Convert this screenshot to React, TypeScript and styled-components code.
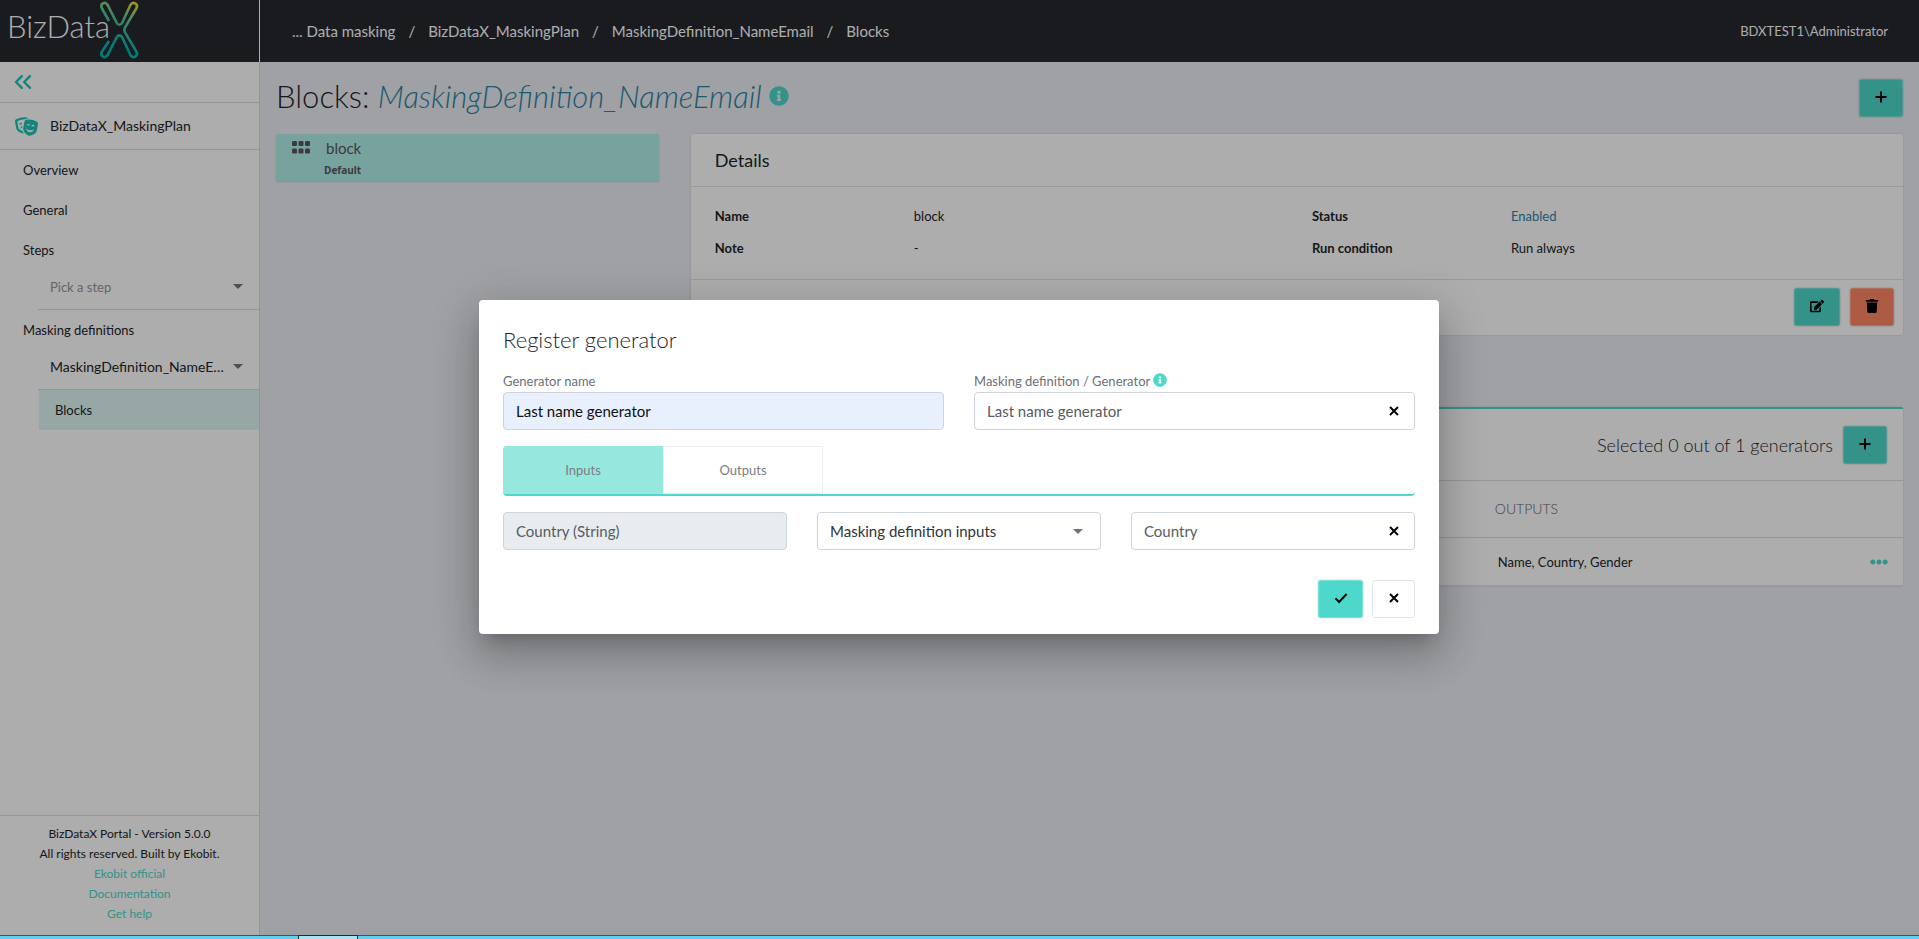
import React, { useState } from "react";
import styled, { createGlobalStyle } from "styled-components";
import { FaEdit, FaEllipsisH, FaInfoCircle, FaTheaterMasks, FaTrash } from "react-icons/fa";
import { ChevronsLeft } from "lucide-react";

const color = {
  teal: "#4dd8cb",
  tealSoft: "#96e8df",
  tealCard: "#b2efe8",
  tealPale: "#dff7f3",
  coral: "#ff8766",
  blue: "#2e84a5",
  header: "#25282f",
  page: "#ecedf3",
  line: "#e4e4e6",
  sideLine: "#dcdcde",
  field: "#ced4da",
};

const GlobalStyle = createGlobalStyle`
  *, *::before, *::after { box-sizing: border-box; }
  body {
    margin: 0;
    font: 400 13px/20px Lato, "Liberation Sans", sans-serif;
    color: #212529;
    background: ${color.page};
  }
  h1, h2, dl, dd { margin: 0; padding: 0; }
  a { text-decoration: none; color: inherit; }
  button, input, select { font: inherit; color: inherit; }
  button { cursor: pointer; }
  svg { display: block; flex: none; }
`;

const Screen = styled.div`
  display: flex;
  flex-direction: column;
  min-height: 100vh;
`;

const Portal = styled.div`
  position: relative;
  flex: 1;
  display: grid;
  grid-template-columns: 260px 1fr;
  grid-template-rows: 62px 1fr;
`;

/* Header */

const Brand = styled.a`
  background: ${color.header};
  border-right: 1px solid #fff;
`;

const TopBar = styled.header`
  display: flex;
  align-items: center;
  justify-content: space-between;
  padding: 0 31px 0 32px;
  background: ${color.header};
  color: #fff;
`;

const Crumbs = styled.nav`
  display: flex;
  gap: 13px;
  font-size: 15px;
`;

/* Sidebar */

const Sidebar = styled.aside`
  display: flex;
  flex-direction: column;
  background: #fff;
  border-right: 1px solid ${color.sideLine};
`;

const SideRow = styled.div<{ $height: number }>`
  display: flex;
  align-items: center;
  gap: 12px;
  height: ${(p) => p.$height}px;
  padding: 0 15px;
  border-bottom: 1px solid ${color.sideLine};
  font-size: 14px;
`;

const CollapseButton = styled.button`
  padding: 0;
  margin-left: -6px;
  border: 0;
  background: none;
  color: #1cc4b4;
`;

const PlanMark = styled.span`
  color: #1cc4b4;
`;

const Nav = styled.nav`
  flex: 1;
`;

const NavItem = styled.a`
  display: flex;
  align-items: center;
  height: 40px;
  padding-left: 23px;
`;

const NavChild = styled(NavItem)`
  margin-left: 39px;
  padding-left: 16px;
  background: ${color.tealPale};
`;

const NavPicker = styled.div`
  display: grid;
  align-items: center;
  height: 40px;
  margin-left: 38px;
  padding-bottom: 6px;
  border-bottom: 1px solid ${color.sideLine};
  > * { grid-area: 1 / 1; }
  > svg { justify-self: end; margin-right: 16px; pointer-events: none; }
`;

const PickerSelect = styled.select<{ $muted?: boolean }>`
  width: 100%;
  height: 28px;
  padding: 0 27px 0 12px;
  border: 0;
  background: none;
  appearance: none;
  overflow: hidden;
  white-space: nowrap;
  text-overflow: ellipsis;
  font-size: ${(p) => (p.$muted ? "13px" : "14px")};
  color: ${(p) => (p.$muted ? "#92969a" : "#212529")};
`;

const SideFooter = styled.footer`
  display: flex;
  flex-direction: column;
  align-items: center;
  padding: 8px 0 11px;
  border-top: 1px solid ${color.sideLine};
  font-size: 12px;
  a { color: ${color.teal}; }
`;

/* Main area */

const Main = styled.main`
  padding: 17px 16px;
`;

const TitleRow = styled.div`
  display: flex;
  align-items: flex-start;
  justify-content: space-between;
  height: 37px;
  margin-bottom: 18px;
`;

const PageTitle = styled.h1`
  display: flex;
  align-items: center;
  gap: 7px;
  font-size: 31px;
  line-height: 34px;
  font-weight: 300;
  em { color: ${color.blue}; }
  svg { color: ${color.teal}; }
`;

const Columns = styled.div`
  display: flex;
  align-items: flex-start;
  gap: 32px;
`;

const BlockCard = styled.a`
  display: grid;
  grid-template-columns: 32px 1fr;
  flex: 0 0 calc(25% - 24px);
  height: 47px;
  padding: 4px 16px 0;
  background: ${color.tealCard};
  border-radius: 2px;
  box-shadow: 0 1px 2px rgba(0, 0, 0, 0.14);
  color: #54575c;
  > svg { margin-top: 3px; }
`;

const BlockName = styled.span`
  font-size: 15px;
  line-height: 20px;
  padding-left: 2px;
`;

const BlockTag = styled.strong`
  grid-column: 2;
  font: 700 10px/18px "Open Sans", sans-serif;
`;

const Content = styled.div`
  flex: 1;
  min-width: 0;
`;

const Card = styled.section`
  background: #fff;
  border-radius: 2px;
  box-shadow: 0 0 2px rgba(0, 0, 0, 0.16);
`;

const CardHead = styled.h2`
  display: flex;
  align-items: center;
  height: 53px;
  padding: 0 24px;
  border-bottom: 1px solid ${color.line};
  font-size: 18px;
  font-weight: 400;
`;

const Facts = styled.dl`
  display: grid;
  grid-template-columns: 1fr 2fr 1fr 2fr;
  row-gap: 12px;
  padding: 19px 9px 21px;
  border-bottom: 1px solid ${color.line};
  dt, dd { padding-left: 15px; }
  dt { font-weight: 700; }
`;

const StatusText = styled.dd`
  color: ${color.blue};
`;

const CardActions = styled.div`
  display: flex;
  justify-content: flex-end;
  gap: 10px;
  padding: 8px 9px 9px;
`;

const Action = styled.button<{ $tone?: "teal" | "coral" | "plain"; $width?: number }>`
  display: flex;
  align-items: center;
  justify-content: center;
  width: ${(p) => p.$width ?? 44}px;
  height: 38px;
  padding: 0 0 2px;
  border: 1px solid ${(p) => (p.$tone === "plain" ? "#e2e4e6" : "rgba(255,255,255,0.25)")};
  border-radius: 3px;
  background: ${(p) => (p.$tone === "plain" ? "#fff" : p.$tone === "coral" ? color.coral : color.teal)};
  box-shadow: ${(p) => (p.$tone === "plain" ? "none" : "0 0 2px rgba(0, 0, 0, 0.25)")};
  color: #000;
`;

const Generators = styled(Card)`
  margin-top: 72px;
  border-top: 2px solid ${color.teal};
`;

const GeneratorsBar = styled.div`
  display: flex;
  align-items: center;
  justify-content: flex-end;
  gap: 10px;
  height: 71px;
  padding: 0 16px;
  font-size: 18px;
  font-weight: 300;
`;

const GeneratorTable = styled.table`
  width: 100%;
  border-collapse: collapse;
  table-layout: fixed;
  border-bottom: 1px solid ${color.line};
  th, td { padding: 0 0 0 4px; text-align: left; border-top: 1px solid ${color.sideLine}; }
  th { height: 57px; font-size: 14px; font-weight: 300; color: #5f6368; }
  td { height: 48px; }
`;

const OutputsHead = styled.th`
  width: 28%;
`;

const LeadHead = styled.th<{ $width: string }>`
  width: ${(p) => p.$width};
`;

const OutputsCell = styled.td`
  && { padding-left: 7px; }
`;

const MenuButton = styled.button`
  display: block;
  margin: 0 15px 0 auto;
  padding: 0;
  border: 0;
  background: none;
  color: ${color.teal};
`;

/* Dialog */

const Scrim = styled.div`
  position: absolute;
  inset: 0;
  display: grid;
  place-items: center;
  padding: 0 1px 1px 0;
  background: rgba(0, 0, 0, 0.32);
`;

const Dialog = styled.form`
  width: 960px;
  max-width: 90vw;
  padding: 24px 24px 16px;
  background: #fff;
  border-radius: 4px;
  box-shadow: 0 11px 15px -7px rgba(0, 0, 0, 0.2), 0 24px 38px 3px rgba(0, 0, 0, 0.14),
    0 9px 46px 8px rgba(0, 0, 0, 0.12);
`;

const DialogTitle = styled.h2`
  margin-bottom: 14px;
  font-size: 22px;
  line-height: 32px;
  font-weight: 300;
`;

const FieldRow = styled.div<{ $columns: number }>`
  display: grid;
  grid-template-columns: repeat(${(p) => p.$columns}, 1fr);
  column-gap: 30px;
`;

const FieldLabel = styled.label`
  display: flex;
  align-items: center;
  gap: 3px;
  height: 22px;
  color: #6c7076;
  svg { color: ${color.teal}; margin-bottom: 2px; }
`;

const FieldBox = styled.div<{ $fill?: string; $ink?: string }>`
  display: flex;
  align-items: center;
  height: 38px;
  border: 1px solid ${color.field};
  border-radius: 4px;
  background: ${(p) => p.$fill ?? "#fff"};
  color: ${(p) => p.$ink ?? "#565c63"};
  font-size: 15px;
  > svg { margin-left: -27px; margin-right: 17px; pointer-events: none; }
`;

const TextInput = styled.input`
  flex: 1;
  min-width: 0;
  height: 100%;
  padding: 0 12px;
  border: 0;
  background: none;
  outline: none;
`;

const SelectInput = styled.select`
  flex: 1;
  min-width: 0;
  height: 100%;
  padding: 0 30px 0 12px;
  border: 0;
  background: none;
  appearance: none;
  outline: none;
`;

const ClearButton = styled.button`
  padding: 4px;
  margin-right: 11px;
  border: 0;
  background: none;
  color: #000;
`;

const Tabs = styled.div`
  display: flex;
  height: 50px;
  margin: 16px 0;
  border-bottom: 2px solid ${color.teal};
  border-radius: 4px;
`;

const Tab = styled.button<{ $active: boolean }>`
  width: 160px;
  border: 1px solid ${(p) => (p.$active ? color.tealSoft : "#ececee")};
  border-radius: ${(p) => (p.$active ? "3px 0 0 0" : "0")};
  background: ${(p) => (p.$active ? color.tealSoft : "#fff")};
  color: #7a7d82;
`;

const DialogActions = styled.div`
  display: flex;
  justify-content: flex-end;
  gap: 9px;
  margin-top: 30px;
`;

/* Task bar at the window's lower edge */

const TaskBar = styled.div`
  display: flex;
  height: 4px;
  background: #62cdf0;
  border-top: 1px solid #3c5560;
`;

const TaskTab = styled.span`
  width: 60px;
  margin: -1px 0 0 298px;
  background: #a9e3f6;
  border: 1px solid #1f2d33;
  border-bottom: 0;
`;

/* Icons */

const PlusIcon = () => (
  <svg width="12" height="12" viewBox="0 0 12 12" stroke="currentColor" strokeWidth="2">
    <path d="M6 0.5v11M0.5 6h11" />
  </svg>
);

const CrossIcon = () => (
  <svg width="10" height="10" viewBox="0 0 10 10" stroke="currentColor" strokeWidth="2">
    <path d="M1 1l8 8M9 1l-8 8" />
  </svg>
);

const CheckIcon = () => (
  <svg width="14" height="12" viewBox="0 0 14 12" stroke="currentColor" strokeWidth="2" fill="none">
    <path d="M1.5 6.4l3.6 3.6L12.6 2" />
  </svg>
);

const CaretIcon = () => (
  <svg width="10" height="5" viewBox="0 0 10 5" fill="#757575">
    <path d="M0 0h10L5 5z" />
  </svg>
);

const BlocksIcon = () => (
  <svg width="18" height="13" viewBox="0 0 18 13" fill="currentColor">
    {[0, 6.5, 13].map((x) =>
      [0, 7.5].map((y) => <rect key={`${x}-${y}`} x={x} y={y} width="5" height="5" rx="1.2" />)
    )}
  </svg>
);

const Logo = () => (
  <svg width="150" height="61" viewBox="0 0 150 61" role="img" aria-label="BizDataX">
    <defs>
      <linearGradient id="ribbon" gradientUnits="userSpaceOnUse" x1="132" y1="2" x2="112" y2="42">
        <stop offset="0" stopColor="#e6df2a" />
        <stop offset="0.4" stopColor="#62c99b" />
        <stop offset="1" stopColor="#00b8ae" />
      </linearGradient>
    </defs>
    <text x="7" y="38" fontFamily="Lato, sans-serif" fontWeight="300" fontSize="31" fill="#fff">
      BizData
    </text>
    <path
      d="M109 21L102 8.500C99.500 4 105 0.800 107.600 5L116.500 22.500C118 25.500 120.800 25.500 122.300 22.500L130.400 5C133 0.800 138.800 4 136.300 8.500L125 27.500C124 29.200 124 30.600 125 32.300L136.300 51.500C138.800 56 133 59.200 130.400 55L122.300 37.500C120.800 34.500 118 34.500 116.500 37.500L107.600 55C105 59.200 99.500 56 102 51.500L109 41"
      fill="none"
      stroke="url(#ribbon)"
      strokeWidth="2.600"
    />
  </svg>
);

type ClearableProps = { id?: string; label?: string; initial: string };

function ClearableField({ id, label, initial }: ClearableProps) {
  const [value, setValue] = useState(initial);
  return (
    <FieldBox>
      <TextInput id={id} aria-label={label} value={value} onChange={(e) => setValue(e.target.value)} />
      <ClearButton type="button" aria-label="Clear" onClick={() => setValue("")}>
        <CrossIcon />
      </ClearButton>
    </FieldBox>
  );
}

function RegisterDialog() {
  const [tab, setTab] = useState("Inputs");
  return (
    <Dialog role="dialog" aria-labelledby="dialog-title" onSubmit={(e) => e.preventDefault()}>
      <DialogTitle id="dialog-title">Register generator</DialogTitle>
      <FieldRow $columns={2}>
        <div>
          <FieldLabel htmlFor="generator-name">Generator name</FieldLabel>
          <FieldBox $fill="#e8effd" $ink="#111">
            <TextInput id="generator-name" defaultValue="Last name generator" />
          </FieldBox>
        </div>
        <div>
          <FieldLabel htmlFor="generator-source">
            Masking definition / Generator <FaInfoCircle size={14} />
          </FieldLabel>
          <ClearableField id="generator-source" initial="Last name generator" />
        </div>
      </FieldRow>
      <Tabs role="tablist">
        {["Inputs", "Outputs"].map((name) => (
          <Tab key={name} type="button" role="tab" aria-selected={tab === name} $active={tab === name} onClick={() => setTab(name)}>
            {name}
          </Tab>
        ))}
      </Tabs>
      <FieldRow $columns={3}>
        <FieldBox $fill="#e9ecef">
          <TextInput aria-label="Input" readOnly value="Country (String)" />
        </FieldBox>
        <FieldBox $ink="#303438">
          <SelectInput aria-label="Input source">
            <option>Masking definition inputs</option>
          </SelectInput>
          <CaretIcon />
        </FieldBox>
        <ClearableField label="Input value" initial="Country" />
      </FieldRow>
      <DialogActions>
        <Action type="submit" $width={45} aria-label="Confirm"><CheckIcon /></Action>
        <Action type="button" $tone="plain" $width={43} aria-label="Cancel"><CrossIcon /></Action>
      </DialogActions>
    </Dialog>
  );
}

const trail = ["... Data masking", "BizDataX_MaskingPlan", "MaskingDefinition_NameEmail", "Blocks"];

export default function App() {
  return (
    <Screen>
      <GlobalStyle />
      <Portal>
        <Brand href="#home"><Logo /></Brand>
        <TopBar>
          <Crumbs aria-label="Breadcrumb">
            {trail.map((name, i) => (
              <React.Fragment key={name}>
                {i > 0 && <span>/</span>}
                <a href="#crumb">{name}</a>
              </React.Fragment>
            ))}
          </Crumbs>
          <span>BDXTEST1\Administrator</span>
        </TopBar>

        <Sidebar>
          <SideRow $height={41}>
            <CollapseButton aria-label="Collapse menu"><ChevronsLeft size={28} strokeWidth={2} /></CollapseButton>
          </SideRow>
          <SideRow $height={47}>
            <PlanMark><FaTheaterMasks size={23} /></PlanMark>
            BizDataX_MaskingPlan
          </SideRow>
          <Nav aria-label="Plan">
            <NavItem href="#overview">Overview</NavItem>
            <NavItem href="#general">General</NavItem>
            <NavItem href="#steps">Steps</NavItem>
            <NavPicker>
              <PickerSelect $muted aria-label="Step"><option>Pick a step</option></PickerSelect>
              <CaretIcon />
            </NavPicker>
            <NavItem href="#definitions">Masking definitions</NavItem>
            <NavPicker>
              <PickerSelect aria-label="Masking definition"><option>MaskingDefinition_NameEmail</option></PickerSelect>
              <CaretIcon />
            </NavPicker>
            <NavChild href="#blocks">Blocks</NavChild>
          </Nav>
          <SideFooter>
            <span>BizDataX Portal - Version 5.0.0</span>
            <span>All rights reserved. Built by Ekobit.</span>
            <a href="#ekobit">Ekobit official</a>
            <a href="#docs">Documentation</a>
            <a href="#help">Get help</a>
          </SideFooter>
        </Sidebar>

        <Main>
          <TitleRow>
            <PageTitle>
              <span>Blocks: <em>MaskingDefinition_NameEmail</em></span>
              <FaInfoCircle size={20} />
            </PageTitle>
            <Action aria-label="Add block"><PlusIcon /></Action>
          </TitleRow>
          <Columns>
            <BlockCard href="#block">
              <BlocksIcon />
              <BlockName>block</BlockName>
              <BlockTag>Default</BlockTag>
            </BlockCard>
            <Content>
              <Card>
                <CardHead>Details</CardHead>
                <Facts>
                  <dt>Name</dt><dd>block</dd>
                  <dt>Status</dt><StatusText>Enabled</StatusText>
                  <dt>Note</dt><dd>-</dd>
                  <dt>Run condition</dt><dd>Run always</dd>
                </Facts>
                <CardActions>
                  <Action $width={46} aria-label="Edit"><FaEdit size={14} /></Action>
                  <Action $tone="coral" aria-label="Delete"><FaTrash size={14} /></Action>
                </CardActions>
              </Card>
              <Generators>
                <GeneratorsBar>
                  Selected 0 out of 1 generators
                  <Action aria-label="Add generator"><PlusIcon /></Action>
                </GeneratorsBar>
                <GeneratorTable>
                  <thead>
                    <tr><LeadHead $width="66%" /><OutputsHead>OUTPUTS</OutputsHead><LeadHead $width="6%" /></tr>
                  </thead>
                  <tbody>
                    <tr>
                      <td />
                      <OutputsCell>Name, Country, Gender</OutputsCell>
                      <td><MenuButton aria-label="More"><FaEllipsisH size={18} /></MenuButton></td>
                    </tr>
                  </tbody>
                </GeneratorTable>
              </Generators>
            </Content>
          </Columns>
        </Main>

        <Scrim><RegisterDialog /></Scrim>
      </Portal>
      <TaskBar><TaskTab /></TaskBar>
    </Screen>
  );
}
